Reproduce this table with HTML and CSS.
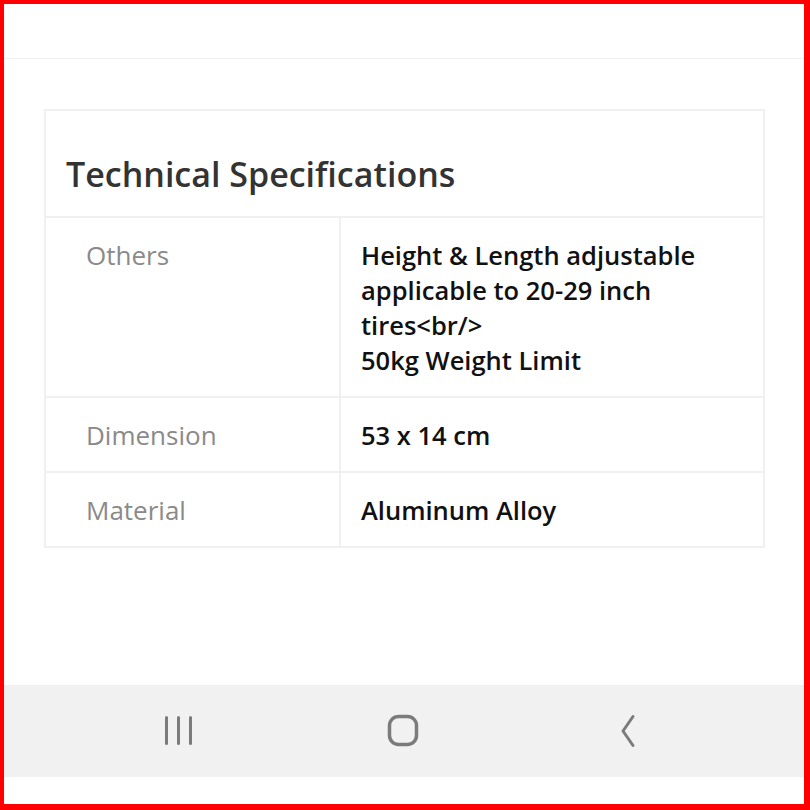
FILE: index.html
```html
<!DOCTYPE html>
<html>
<head>
<meta charset="utf-8">
<link rel="stylesheet" href="styles.css">
</head>
<body>
<div class="frame">
  <div class="topbar"></div>
  <main class="content">
    <section class="card">
      <h2 class="card-title">Technical Specifications</h2>
      <table class="specs">
        <colgroup><col class="col-label"><col></colgroup>
        <tr>
          <td class="label">Others</td>
          <td class="value">Height &amp; Length adjustable applicable to 20-29 inch tires&lt;br/&gt;<br>50kg Weight Limit</td>
        </tr>
        <tr>
          <td class="label">Dimension</td>
          <td class="value">53 x 14 cm</td>
        </tr>
        <tr>
          <td class="label">Material</td>
          <td class="value">Aluminum Alloy</td>
        </tr>
      </table>
    </section>
  </main>
  <nav class="navbar">
    <span class="nav-btn">
      <svg width="40" height="40" viewBox="0 0 40 40"><path d="M7.5 6.5v26M19.5 6.5v26M31.5 6.5v26" stroke="#7b7b7b" stroke-width="3" stroke-linecap="round" fill="none"/></svg>
    </span>
    <span class="nav-btn">
      <svg width="40" height="40" viewBox="0 0 40 40"><rect x="5.5" y="5.5" width="27" height="28" rx="9" stroke="#7b7b7b" stroke-width="3.5" fill="none"/></svg>
    </span>
    <span class="nav-btn">
      <svg width="40" height="40" viewBox="0 0 40 40"><path d="M24 5.5L14 20l10 14.5" stroke="#7b7b7b" stroke-width="3" stroke-linecap="round" stroke-linejoin="round" fill="none"/></svg>
    </span>
  </nav>
  <div class="bottom-gap"></div>
</div>
</body>
</html>
```
FILE: styles.css
```css
html, body {
  margin: 0;
  padding: 0;
  background: #fff;
}
.frame {
  box-sizing: border-box;
  width: 810px;
  height: 810px;
  border-style: solid;
  border-color: #ff0000;
  border-width: 4px 6px 6px 4px;
  display: flex;
  flex-direction: column;
  font-family: "Open Sans", "Noto Sans", sans-serif;
  background: #fff;
}
.topbar {
  height: 54px;
  border-bottom: 1px solid #f1f1f1;
  flex: none;
}
.content {
  flex: 1;
  padding: 50px 39px 0 40px;
}
.card {
  border: 2px solid #f0f0f0;
}
.card-title {
  margin: 0;
  padding: 40px 20px 18px;
  font-size: 34px;
  line-height: 47px;
  font-weight: 600;
  color: #333;
  border-bottom: 2px solid #f0f0f0;
}
.specs {
  width: 100%;
  border-collapse: collapse;
  table-layout: fixed;
}
.col-label {
  width: 294px;
}
.specs td {
  padding: 20px 20px 18px;
  font-size: 25.5px;
  line-height: 35px;
  vertical-align: top;
  border-top: 2px solid #f0f0f0;
}
.specs tr:first-child td {
  border-top: none;
}
.specs .label {
  padding-left: 40px;
  font-size: 26px;
  color: #8a8a8a;
  border-right: 2px solid #f0f0f0;
}
.specs .value {
  color: #111;
  font-weight: 600;
}
.navbar {
  flex: none;
  height: 92px;
  background: #f1f1f1;
  display: flex;
  justify-content: center;
  align-items: center;
  gap: 185px;
}
.nav-btn {
  display: flex;
  width: 40px;
  height: 40px;
}
.bottom-gap {
  flex: none;
  height: 27px;
}
```
